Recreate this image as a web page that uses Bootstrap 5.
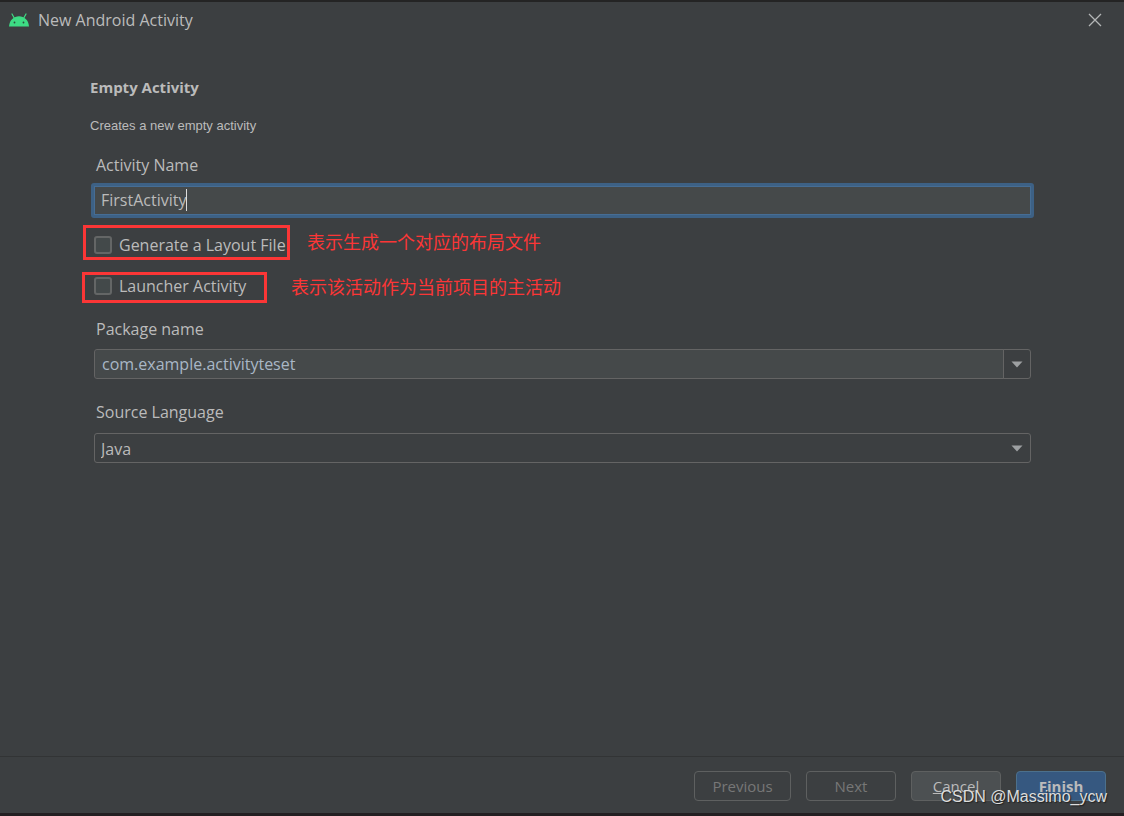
<!DOCTYPE html>
<html lang="en">
<head>
<meta charset="utf-8">
<meta name="viewport" content="width=device-width, initial-scale=1">
<title>New Android Activity</title>
<link href="https://cdn.jsdelivr.net/npm/bootstrap@5.3.0/dist/css/bootstrap.min.css" rel="stylesheet">
<style>
  body { background: #3c3f41; color: #bbbbbb; font-family: "Open Sans", "Noto Sans CJK SC", sans-serif; font-size: 16px; line-height: 24px; }
  .dialog { border-top: 2px solid #242424; border-bottom: 3px solid #231f22; }
  .titlebar { height: 36px; padding: 0 22px 0 8px; }
  .titlebar h1 { font-size: 16px; line-height: 24px; font-weight: 400; }
  .close-x { width: 14px; height: 36px; color: #b4b6b7; line-height: 1; }
  .content { padding: 37px 90px 0; }
  .content h2 { font-size: 15px; line-height: 24px; font-weight: 700; margin-bottom: 17px; }
  .summary { font-family: "Liberation Sans", Arial, sans-serif; font-size: 13px; line-height: 20px; margin-bottom: 17px; }
  .field-label { display: block; padding-left: 6px; }
  .form-control, .form-select { background-color: #45494a; color: #bbbbbb; font-size: 16px; line-height: 22px; border: 1px solid #646464; border-radius: 3px; }
  .name-field { margin: 6px 0 0 1px; }
  .name-field .form-control, .name-field .form-control:focus { height: 35px; padding: 0 7px 2px; background: #45494a; color: #bbbbbb; border: 3px solid #3d6185; box-shadow: inset 0 0 0 1px #466d94; caret-color: transparent; }
  .caret { left: 95px; top: 6px; width: 1px; height: 22px; background: #dddddd; }
  .marked-row { margin-top: 7px; gap: 17px; }
  .marked-row + .marked-row { margin-top: 12px; gap: 24px; }
  .marked { border: 3px solid #fb3636; gap: 7px; padding-left: 8px; }
  .marked-layout { margin-left: -7px; width: 207px; height: 35px; padding-top: 5px; }
  .marked-launcher { margin-left: -8px; width: 185px; height: 31px; padding: 0 0 4px 9px; }
  .marked .form-check-input { width: 18px; height: 18px; margin: 0; background-color: #43494a; border: 2px solid #646666; border-radius: 3px; }
  .note { color: #fb3636; font-family: "Noto Sans CJK SC", sans-serif; font-size: 18px; font-weight: 400; padding-bottom: 4px; }
  .package-label { margin-top: 14px; }
  .language-label { margin-top: 21px; }
  .combo { height: 30px; width: auto; margin: 8px 3px 0 4px; }
  .combo .form-control { padding: 0 7px; color: #a9b7c6; }
  .combo-toggle { width: 28px; border: 1px solid #646464; border-radius: 0 3px 3px 0; color: #9da0a2; }
  .language-combo { margin-top: 9px; }
  .language { padding: 1px 6px 0; background-color: transparent; background-image: none; }
  .language option { background: #3c3f41; }
  .language-arrow { right: 8px; top: 12px; color: #9da0a2; pointer-events: none; }
  .arrow { display: block; }
  .actions { border-top: 1px solid #323435; padding: 14px 18px 12px; gap: 15px; }
  .actions .btn { width: 90px; height: 30px; padding: 0; font-size: 15px; line-height: 26px; border: 1px solid #5e6060; border-radius: 4px; color: #bbbbbb; background: #4c5052; opacity: 1; }
  .actions .btn:disabled { background: transparent; color: #777777; }
  .actions .btn-previous { width: 97px; }
  .actions .btn-finish { background: #365880; border-color: #4c708c; font-weight: 700; }
  .watermark { right: 17px; bottom: 6px; font-family: "Liberation Sans", Arial, sans-serif; font-size: 16px; line-height: 20px; color: #dddddd; text-shadow: 1px 1px 1px #222222; pointer-events: none; }
</style>
</head>
<body>
<div class="dialog d-flex flex-column min-vh-100 position-relative">
  <header class="titlebar d-flex align-items-center">
    <svg class="me-2" width="22" height="16" viewBox="0 0 22 16" aria-hidden="true">
      <path d="M1 14.500C1.500 8 6 4.300 11 4.300S20.500 8 21 14.500Z" fill="#3ddc84"/>
      <path d="M6.500 6.500L4 2M15.500 6.500L18 2" stroke="#3ddc84" stroke-width="1.200" stroke-linecap="round"/>
      <circle cx="6.500" cy="10.500" r="0.900" fill="#2c4a3c"/><circle cx="15.500" cy="10.500" r="0.900" fill="#2c4a3c"/>
    </svg>
    <h1 class="m-0 flex-grow-1">New Android Activity</h1>
    <button type="button" class="close-x btn p-0 border-0 d-flex align-items-center justify-content-center" aria-label="Close">
      <svg width="14" height="14" viewBox="0 0 14 14" aria-hidden="true"><path d="M1 1L13 13M13 1L1 13" stroke="currentColor" stroke-width="1.300" fill="none"/></svg>
    </button>
  </header>

  <main class="content flex-grow-1">
    <h2>Empty Activity</h2>
    <p class="summary">Creates a new empty activity</p>

    <label class="field-label" for="activityName">Activity Name</label>
    <div class="name-field position-relative">
      <input id="activityName" class="form-control" type="text" value="FirstActivity" spellcheck="false">
      <span class="caret position-absolute"></span>
    </div>

    <div class="marked-row d-flex align-items-center">
      <div class="marked marked-layout d-flex align-items-center">
        <input id="genLayout" class="form-check-input" type="checkbox">
        <label for="genLayout" class="text-nowrap">Generate a Layout File</label>
      </div>
      <span class="note">表示生成一个对应的布局文件</span>
    </div>
    <div class="marked-row d-flex align-items-center">
      <div class="marked marked-launcher d-flex align-items-center">
        <input id="launcher" class="form-check-input" type="checkbox">
        <label for="launcher" class="text-nowrap">Launcher Activity</label>
      </div>
      <span class="note">表示该活动作为当前项目的主活动</span>
    </div>

    <label class="field-label package-label" for="packageName">Package name</label>
    <div class="combo input-group flex-nowrap">
      <input id="packageName" class="form-control" type="text" value="com.example.activityteset" spellcheck="false">
      <button type="button" class="combo-toggle btn p-0 d-flex align-items-center justify-content-center" aria-label="Choose package">
        <svg class="arrow" width="12" height="7" viewBox="0 0 12 7" aria-hidden="true"><path d="M0.500 0.500H11.500L6 6.500Z" fill="currentColor"/></svg>
      </button>
    </div>

    <label class="field-label language-label" for="language">Source Language</label>
    <div class="combo language-combo position-relative">
      <select id="language" class="language form-select h-100"><option>Java</option><option>Kotlin</option></select>
      <span class="language-arrow position-absolute"><svg class="arrow" width="12" height="7" viewBox="0 0 12 7" aria-hidden="true"><path d="M0.500 0.500H11.500L6 6.500Z" fill="currentColor"/></svg></span>
    </div>
  </main>

  <footer class="actions d-flex justify-content-end">
    <button type="button" class="btn btn-previous" disabled>Previous</button>
    <button type="button" class="btn" disabled>Next</button>
    <button type="button" class="btn"><u>C</u>ancel</button>
    <button type="button" class="btn btn-finish"><u>F</u>inish</button>
  </footer>
  <span class="watermark position-absolute">CSDN @Massimo_ycw</span>
</div>
<script src="https://cdn.jsdelivr.net/npm/bootstrap@5.3.0/dist/js/bootstrap.bundle.min.js"></script>
</body>
</html>
